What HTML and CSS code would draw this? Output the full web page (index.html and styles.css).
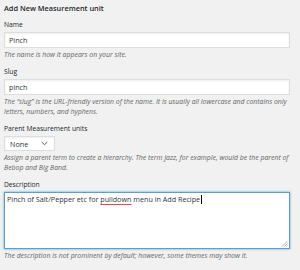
FILE: index.html
```html
<!DOCTYPE html>
<html lang="en">
<head>
<meta charset="UTF-8" />
<title>Add New Measurement unit</title>
<link rel="stylesheet" href="styles.css">
</head>
<body>
  <div class="form-wrap">
    <h2>Add New Measurement unit</h2>

    <div class="form-field">
      <label for="tag-name">Name</label>
      <input type="text" id="tag-name" value="Pinch" />
      <p>The name is how it appears on your site.</p>
    </div>

    <div class="form-field">
      <label for="tag-slug">Slug</label>
      <input type="text" id="tag-slug" value="pinch" />
      <p>The “slug” is the URL-friendly version of the name. It is usually all lowercase and contains only letters, numbers, and hyphens.</p>
    </div>

    <div class="form-field">
      <label for="parent">Parent Measurement units</label>
      <div class="select">
        <span>None</span>
        <svg width="7" height="5" viewBox="0 0 7 5"><path d="M0.7 1 L3.5 3.7 L6.3 1" fill="none" stroke="#555" stroke-width="1"/></svg>
      </div>
      <p>Assign a parent term to create a hierarchy. The term Jazz, for example, would be the parent of Bebop and Big Band.</p>
    </div>

    <div class="form-field">
      <label for="tag-description">Description</label>
      <div class="textarea" id="tag-description">
        Pinch of Salt/Pepper etc for <span class="misspelled">pulldown</span> menu in Add Recipe<span class="caret"></span>
        <svg class="grip" width="7" height="7" viewBox="0 0 7 7"><path d="M6.5 1 L1 6.5 M6.5 3.5 L3.5 6.5 M6.5 5.5 L5.5 6.5" stroke="#999" stroke-width="0.8"/></svg>
      </div>
      <p>The description is not prominent by default; however, some themes may show it.</p>
    </div>
  </div>
</body>
</html>
```

FILE: styles.css
```css
body, html {
  margin: 0;
  padding: 0;
  background: #f1f1f1;
  font-family: "Open Sans", "Noto Sans", sans-serif;
  color: #23282d;
}
.form-wrap {
  padding: 3px 10px 0 4px;
}
h2 {
  font-size: 7.35px;
  line-height: 11px;
  font-weight: 600;
  margin: 0 0 6px 0;
  color: #23282d;
}
.form-field {
  margin-bottom: 8px;
}
.form-field label {
  display: block;
  font-size: 6.7px;
  line-height: 10px;
  margin-bottom: 2px;
}
.form-field p {
  margin: 2px 0 0 0;
  font-size: 6.9px;
  line-height: 9.4px;
  font-style: italic;
  color: #666;
}
input[type=text] {
  display: block;
  width: 100%;
  height: 16px;
  box-sizing: border-box;
  margin: 0;
  padding: 0 4px;
  font-family: inherit;
  font-size: 7.2px;
  color: #32373c;
  background: #fff;
  border: 1px solid #ddd;
  box-shadow: inset 0 1px 2px rgba(0, 0, 0, .07);
  outline: none;
}
.select {
  display: flex;
  align-items: center;
  justify-content: space-between;
  width: 51px;
  height: 15px;
  box-sizing: border-box;
  padding: 0 6px 0 5px;
  font-size: 7.2px;
  color: #32373c;
  background: #fff;
  border: 1px solid #ddd;
  box-shadow: inset 0 1px 2px rgba(0, 0, 0, .07);
}
.textarea {
  position: relative;
  height: 57px;
  box-sizing: border-box;
  padding: 1px 2px;
  font-size: 7.2px;
  line-height: 10px;
  color: #32373c;
  background: #fff;
  border: 1px solid #5b9dd9;
  box-shadow: 0 0 2px rgba(30, 140, 190, .8);
}
.misspelled {
  text-decoration: underline #e8484f;
  text-decoration-thickness: 1px;
  text-underline-offset: 1.5px;
}
.caret {
  display: inline-block;
  width: 1px;
  height: 9px;
  margin-left: 1px;
  background: #000;
  vertical-align: -2px;
}
.grip {
  position: absolute;
  right: 1px;
  bottom: 1px;
}
```
